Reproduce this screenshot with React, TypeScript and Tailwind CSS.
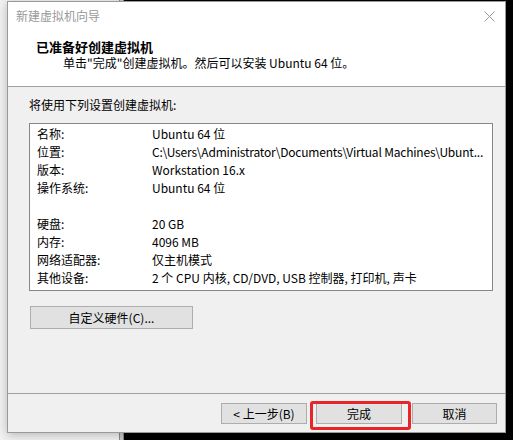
import React from 'react'

interface Row {
    label: string
    value: string
    tight?: boolean
}

const rows: Row[] = [
    { label: '名称:', value: 'Ubuntu 64 位' },
    { label: '位置:', value: 'C:\\Users\\Administrator\\Documents\\Virtual Machines\\Ubunt...', tight: true },
    { label: '版本:', value: 'Workstation 16.x' },
    { label: '操作系统:', value: 'Ubuntu 64 位' },
    { label: '', value: '' },
    { label: '硬盘:', value: '20 GB' },
    { label: '内存:', value: '4096 MB' },
    { label: '网络适配器:', value: '仅主机模式' },
    { label: '其他设备:', value: '2 个 CPU 内核, CD/DVD, USB 控制器, 打印机, 声卡' },
]

const font = "font-['Microsoft_YaHei_UI','Noto_Sans_CJK_SC',sans-serif]"

const WinButton: React.FC<{ label: string; className?: string }> = ({ label, className }) => (
    <button className={`h-[21px] bg-[#e1e1e1] border border-[#adadad] text-[12px] leading-[19px] text-black ${className ?? ''}`}>
        {label}
    </button>
)

const App: React.FC = () => {
    return (
        <div className={`relative w-[513px] h-[440px] overflow-hidden flex ${font}`}>
            {/* Desktop behind the dialog */}
            <div className="w-[119px] h-full bg-[#f3f3f3]" />
            <div className="w-[5px] h-full bg-[#c8c8c8] border-x border-[#8a8a8a]" />
            <div className="flex-1 h-full bg-black" />

            {/* Dialog window */}
            <div className="absolute left-[7px] top-[1px] w-[499px] h-[432px] border border-[#9a9a9a] bg-[#f0f0f0] flex flex-col shadow-[0_2px_10px_rgba(0,0,0,0.25)]">
                {/* Title bar */}
                <div className="h-[28px] bg-white flex items-center justify-between pl-[8px] pr-[9px]">
                    <span className="text-[12px] text-[#999999]">新建虚拟机向导</span>
                    <svg width="11" height="11" viewBox="0 0 11 11" className="mr-[1px]">
                        <path d="M0.5 0.5 L10.5 10.5 M10.5 0.5 L0.5 10.5" stroke="#9a9a9a" strokeWidth="1" />
                    </svg>
                </div>

                {/* Header */}
                <div className="h-[57px] bg-white pt-[9px] border-b border-[#a0a0a0]">
                    <div className="pl-[28px] text-[13px] leading-[16px] font-bold text-black">已准备好创建虚拟机</div>
                    <div className="pl-[55px] text-[12px] leading-[16px] text-black">单击"完成"创建虚拟机。然后可以安装 Ubuntu 64 位。</div>
                </div>

                {/* Body */}
                <div className="flex-1 pt-[10px] pl-[21px]">
                    <div className="text-[12px] leading-[16px] text-black">将使用下列设置创建虚拟机:</div>
                    <div className="mt-[10px] w-[464px] h-[168px] bg-white border border-[#828790] pt-[1px] pl-[7px]">
                        {rows.map((row, i) => (
                            <div key={i} className="flex h-[18px] items-center text-[12px] text-black whitespace-nowrap">
                                <span className="w-[115px] shrink-0">{row.label}</span>
                                <span className={row.tight ? 'tracking-[-0.2px]' : ''}>{row.value}</span>
                            </div>
                        ))}
                    </div>
                    <WinButton label="自定义硬件(C)..." className="mt-[15px] ml-[1px] w-[163px] h-[23px] leading-[21px]" />
                </div>

                {/* Footer */}
                <div className="h-[39px] border-t border-[#a0a0a0] flex justify-end items-start pt-[9px] pr-[8px]">
                    <WinButton label="< 上一步(B)" className="w-[86px]" />
                    <div className="relative ml-[9px]">
                        <WinButton label="完成" className="w-[86px] block" />
                        <div className="absolute -left-[6px] -right-[9px] -top-[2px] -bottom-[6px] border-[3px] border-[#e8262a] rounded-[3px]" />
                    </div>
                    <WinButton label="取消" className="w-[85px] ml-[10px]" />
                </div>
            </div>
        </div>
    )
}

export default App
